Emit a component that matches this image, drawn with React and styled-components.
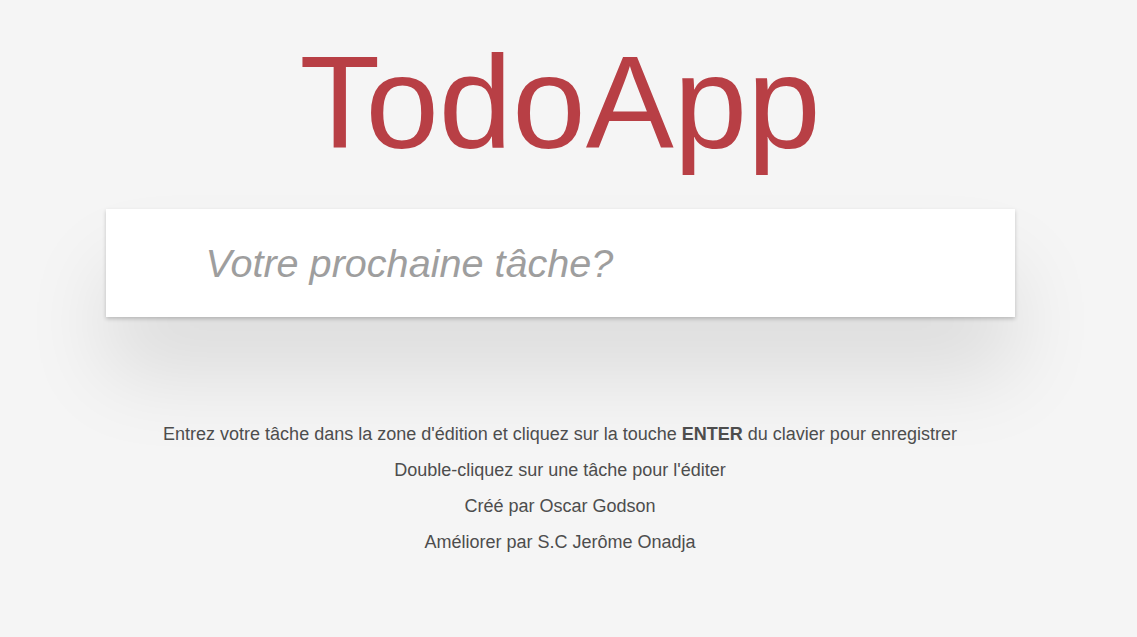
import React from "react"
import styled, { createGlobalStyle } from "styled-components"

const GlobalStyle = createGlobalStyle`
    html, body {
        margin: 0;
        padding: 0;
    }

    body {
        background: #f5f5f5;
        color: #4d4d4d;
        font-family: "Liberation Sans", Arial, sans-serif;
        -webkit-font-smoothing: antialiased;
    }
`

const Page = styled.div`
    width: 1120px;
    padding-top: 29px;
    display: flex;
    flex-direction: column;
    align-items: center;
`

const Title = styled.h1`
    margin: 0;
    color: #b83f45;
    font-family: "Liberation Sans", Arial, sans-serif;
    font-size: 132px;
    font-weight: 400;
    line-height: 148px;
    text-align: center;
`

const TodoBox = styled.section`
    width: 909px;
    margin-top: 32px;
    background: #fff;
    box-shadow: 0 2px 4px 0 rgba(0, 0, 0, 0.2), 0 58px 84px 0 rgba(0, 0, 0, 0.1);
`

const NewTodo = styled.input`
    display: block;
    box-sizing: border-box;
    width: 100%;
    height: 108px;
    margin: 0;
    padding: 0 16px 0 100px;
    border: none;
    outline: none;
    background: transparent;
    color: #4d4d4d;
    font-family: "Liberation Sans", Arial, sans-serif;
    font-size: 39.6px;

    &::placeholder {
        color: #9e9e9e;
        font-style: italic;
    }
`

const Info = styled.footer`
    margin-top: 99px;
    text-align: center;
`

const Line = styled.p`
    margin: 0;
    font-size: 18px;
    line-height: 36px;
    color: #4d4d4d;

    strong {
        font-weight: 700;
    }
`

export default function App() {
    return (
        <>
            <GlobalStyle />
            <Page>
                <Title>TodoApp</Title>
                <TodoBox>
                    <NewTodo placeholder="Votre prochaine tâche?" />
                </TodoBox>
                <Info>
                    <Line>
                        Entrez votre tâche dans la zone d'édition et cliquez sur la touche <strong>ENTER</strong> du clavier pour enregistrer
                    </Line>
                    <Line>Double-cliquez sur une tâche pour l'éditer</Line>
                    <Line>Créé par Oscar Godson</Line>
                    <Line>Améliorer par S.C Jerôme Onadja</Line>
                </Info>
            </Page>
        </>
    )
}
